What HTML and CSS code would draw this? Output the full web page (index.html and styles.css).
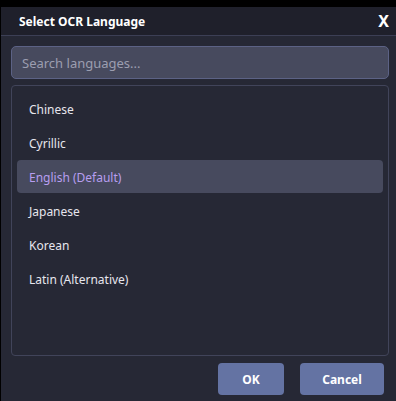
FILE: index.html
```html
<!DOCTYPE html>
<html>
  <head>
    <link rel="stylesheet" href="styles.css">
  </head>
  <body>
    <div class="dialog">
      <div class="title-bar">
        <span class="title">Select OCR Language</span>
        <span class="close">X</span>
      </div>
      <div class="content">
        <input type="text" class="search" placeholder="Search languages..." />
        <div class="lang-list">
          <div class="lang">Chinese</div>
          <div class="lang">Cyrillic</div>
          <div class="lang selected">English (Default)</div>
          <div class="lang">Japanese</div>
          <div class="lang">Korean</div>
          <div class="lang">Latin (Alternative)</div>
        </div>
        <div class="buttons">
          <button class="btn ok">OK</button>
          <button class="btn cancel">Cancel</button>
        </div>
      </div>
    </div>
  </body>
</html>
```

FILE: styles.css
```css
html,
body {
  margin: 0;
  height: 100%;
  background-color: #000;
}
body {
  font-family: "Noto Sans", "Open Sans", sans-serif;
  font-size: 12px;
  color: #e6e6ee;
  padding-top: 7px;
  padding-left: 1px;
  box-sizing: border-box;
}
.dialog {
  height: 100%;
  display: flex;
  flex-direction: column;
  background-color: #262835;
}
.title-bar {
  height: 29px;
  display: flex;
  align-items: center;
  justify-content: space-between;
  padding: 0 7px 0 18px;
  background-color: #1f202b;
  border-bottom: 1px solid #3c3f55;
}
.title {
  font-weight: bold;
  font-size: 12px;
  color: #fff;
}
.close {
  font-weight: bold;
  font-size: 16px;
  color: #fff;
}
.content {
  flex: 1;
  display: flex;
  flex-direction: column;
  padding: 10px 7px 6px 10px;
}
.search {
  height: 33px;
  box-sizing: border-box;
  padding: 0 10px;
  font-family: inherit;
  font-size: 13px;
  color: #e6e6ee;
  background-color: #474a5e;
  border: 1px solid #5c6285;
  border-radius: 5px;
  outline: none;
}
.search::placeholder {
  color: #9c9eb0;
}
.lang-list {
  margin-top: 6px;
  height: 271px;
  box-sizing: border-box;
  border: 1px solid #41445a;
  border-radius: 4px;
  padding: 6px 5px;
  display: flex;
  flex-direction: column;
  gap: 1px;
}
.lang {
  height: 33px;
  box-sizing: border-box;
  display: flex;
  align-items: center;
  padding: 2px 0 0 12px;
  border-radius: 4px;
}
.lang.selected {
  background-color: #474a5e;
  color: #b79ef0;
}
.buttons {
  margin-top: 7px;
  display: flex;
  justify-content: flex-end;
  gap: 16px;
  padding-right: 5px;
}
.btn {
  height: 32px;
  border: none;
  border-radius: 4px;
  background-color: #6473a3;
  color: #fff;
  font-family: inherit;
  font-weight: bold;
  font-size: 12px;
}
.ok {
  width: 66px;
}
.cancel {
  width: 84px;
}
```
